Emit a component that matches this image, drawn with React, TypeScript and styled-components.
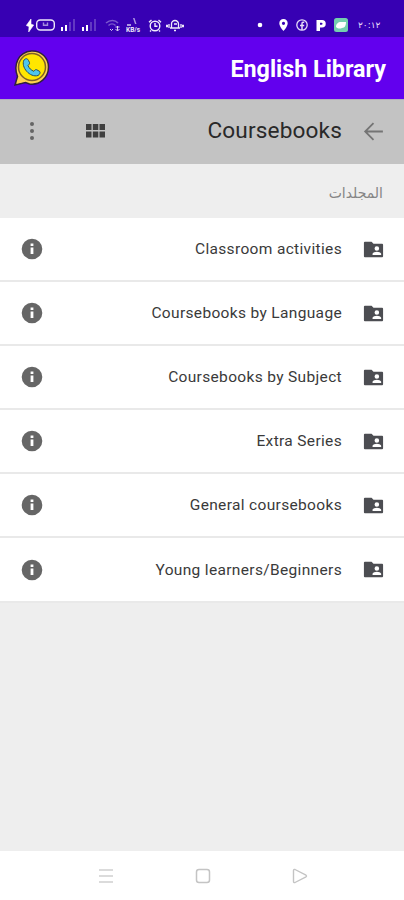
import React from "react";
import styled, { createGlobalStyle } from "styled-components";

const Global = createGlobalStyle`
  * { box-sizing: border-box; }
  body { margin: 0; background: #eee; font-family: Roboto, "Noto Sans", sans-serif; }
`;

const Screen = styled.div`
  width: 404px;
  height: 900px;
  display: flex;
  flex-direction: column;
  overflow: hidden;
  background: #eeeeee;
`;

const StatusBar = styled.header`
  height: 37px;
  flex: none;
  background: #3700b3;
  display: flex;
  align-items: flex-end;
  justify-content: space-between;
  padding: 0 23px 5px 26px;
`;

const StatusGroup = styled.div<{ $gap: number }>`
  display: flex;
  align-items: center;
  height: 14px;
  gap: ${(p) => p.$gap}px;
`;

const StatusIcon = styled.svg<{ $before?: number }>`
  display: block;
  flex: none;
  margin-left: ${(p) => p.$before ?? 0}px;
`;

const Clock = styled.span`
  width: 23px;
  margin-left: 2px;
  font: 400 9px/14px "DejaVu Sans", sans-serif;
  letter-spacing: -0.2px;
  color: #e6dcfa;
  white-space: nowrap;
`;

const AppBar = styled.div`
  height: 62px;
  flex: none;
  background: #6200ee;
  display: flex;
  align-items: center;
  justify-content: space-between;
  padding: 0 18px 0 13px;
`;

const AppTitle = styled.h1`
  margin: 0;
  padding-top: 2px;
  font-size: 23.3px;
  line-height: 30px;
  font-weight: 700;
  color: #fff;
`;

const Toolbar = styled.div`
  height: 65px;
  flex: none;
  background: #c3c3c3;
  border-top: 1px solid #b3adc0;
  display: flex;
  align-items: center;
  padding: 0 18px 2px 20px;
`;

const ToolIcon = styled.svg<{ $gap?: number }>`
  display: block;
  flex: none;
  margin-left: ${(p) => p.$gap ?? 0}px;
`;

const ToolTitle = styled.h2`
  margin: 0 0 0 auto;
  font-size: 22.6px;
  line-height: 30px;
  font-weight: 400;
  letter-spacing: 0.15px;
  color: #292929;
`;

const SectionLabel = styled.div`
  height: 54px;
  flex: none;
  direction: rtl;
  padding: 18px 21px 0;
  font: 400 14px/22px "DejaVu Sans", sans-serif;
  color: #858585;
`;

const List = styled.ul`
  list-style: none;
  margin: 0;
  padding: 0;
`;

const Row = styled.li`
  height: 64.1px;
  background: #fff;
  border-bottom: 2px solid #e9e9e9;
  display: flex;
  align-items: center;
  padding: 0 19px 0 20px;
`;

const RowText = styled.span`
  margin-left: auto;
  margin-right: 20px;
  font-size: 15.5px;
  line-height: 22px;
  letter-spacing: 0.34px;
  color: #3a3a3a;
  white-space: nowrap;
`;

const NavBar = styled.nav`
  height: 49px;
  flex: none;
  margin-top: auto;
  background: #fff;
  display: flex;
  justify-content: center;
  align-items: center;
  gap: 81px;
  padding-left: 1px;
`;

const InfoIcon = () => (
  <ToolIcon width="24" height="24" viewBox="0 0 24 24" fill="#666">
    <path d="M12 1.700a10.300 10.300 0 1 0 0 20.600 10.300 10.300 0 0 0 0-20.600zM13.400 17h-2.800v-6.500h2.800V17zm0-8h-2.800V6.400h2.800V9z" />
  </ToolIcon>
);

const FolderIcon = () => (
  <ToolIcon width="23" height="23" viewBox="0 0 24 24" fill="#4c4d52">
    <path d="M21 6h-9l-2-2H3c-.6 0-1 .4-1 1v14c0 .6.4 1 1 1h18c.6 0 1-.4 1-1V7c0-.6-.4-1-1-1zm-5.500 2.500a2.400 2.400 0 1 1 0 4.800 2.400 2.400 0 0 1 0-4.800zM20 17.700h-9v-1.200c0-1.500 3-2.200 4.500-2.200s4.500.7 4.500 2.200v1.200z" />
  </ToolIcon>
);

const Signal = ({ before }: { before: number }) => (
  <StatusIcon $before={before} width="16" height="12" viewBox="0 0 16 12" fill="#fff">
    <path d="M1 8h2v4H1zM5 6h2v6H5z" />
    <path d="M9 3h2v9H9zM13 0h2v12h-2z" opacity=".22" />
  </StatusIcon>
);

const Logo = () => (
  <ToolIcon width="37" height="38" viewBox="0 0 36 38">
    <path d="M4 27.500C-.5 15.500 5 3 18 2c10-.5 17 7 17 16 0 11-9 18.500-19 17l-4-1.500L1.500 36z" fill="#ffd34f" stroke="#30203f" strokeWidth="1.500" />
    <circle cx="18.500" cy="18" r="13.500" fill="#ffe600" stroke="#806029" strokeWidth="1.500" />
    <path d="M5 29 3.500 34.500 11 32.500" fill="#ffd34f" />
    <path d="M10.500 11c2-2 3.500-1.500 4.500.5l1 2c.5 1-.5 2-1.500 3 1.200 3 3 4.500 5.800 5.800 1.200-1.500 2-2 3-1.500l2.700 1.500c1.200 1 .5 3-1.500 4.200C16.500 29 7 18 10.500 11z" fill="#4fc6ee" stroke="#284d59" strokeWidth="1" />
  </ToolIcon>
);

const folders = [
  "Classroom activities",
  "Coursebooks by Language",
  "Coursebooks by Subject",
  "Extra Series",
  "General coursebooks",
  "Young learners/Beginners",
];

export default function App() {
  return (
    <>
      <Global />
      <Screen>
        <StatusBar>
          <StatusGroup $gap={0}>
            <StatusIcon width="8" height="13" viewBox="0 0 8 13" fill="#fff">
              <path d="M5 0 .3 6.500 3 7.500 2.700 13 7.700 6 5 5.300z" stroke="#fff" strokeWidth=".6" />
            </StatusIcon>
            <StatusIcon $before={2} width="19" height="12" viewBox="0 0 19 12" fill="none" stroke="#eee8fa" strokeWidth="1.400">
              <rect x=".7" y="1" width="17.600" height="10" rx="3.500" />
              <path d="M7.500 3.500v2.700h4V3.500" opacity=".6" />
            </StatusIcon>
            <Signal before={5} />
            <Signal before={5} />
            <StatusIcon $before={8} width="16" height="13" viewBox="0 0 16 13" fill="none" stroke="#fff">
              <path d="M1 4c4-3.500 9-3.500 12 0M3.500 6.500c2-2 5-2 7 0" opacity=".35" strokeWidth="1.500" />
              <path d="m5 10 1.500 1.500L8 10M12.500 7v4.500m-2-1.500 2 2 2-2m0-2h-4" opacity=".8" />
            </StatusIcon>
            <StatusIcon $before={5} width="16" height="14" viewBox="0 0 16 14" fill="#eee8fa">
              <path d="M7 0h1.500l2 6H9zM1 6h4v2H1z" opacity=".65" />
              <text x="0" y="13.500" fontSize="6.500" fontWeight="700" fontFamily="Roboto">KB/s</text>
            </StatusIcon>
            <StatusIcon $before={6} width="14" height="13" viewBox="0 0 14 13" fill="none" stroke="#f2edfc" strokeWidth="1.400">
              <circle cx="7" cy="7" r="4.800" />
              <path d="M7 4v3.300h2.500M1 3.200 3.500 1M13 3.200 10.500 1M3 11.500l-1 1m9-1 1 1" />
            </StatusIcon>
            <StatusIcon $before={4} width="18" height="13" viewBox="0 0 18 13" fill="none" stroke="#f0eafa" strokeWidth="1.300">
              <path d="M5.500 9V5a3.500 3.500 0 0 1 7 0v4h1.500M4 9h10M8 11.500h2M8 5h3M3 5v4M15 5v4" />
              <path d="M0 7h2m14 0h2" strokeWidth="2.500" />
            </StatusIcon>
          </StatusGroup>
          <StatusGroup $gap={8}>
            <StatusIcon width="6" height="6" viewBox="0 0 6 6" fill="#fff"><circle cx="3" cy="3" r="2.300" /></StatusIcon>
            <StatusIcon $before={8} width="9" height="12" viewBox="0 0 9 12" fill="#fff">
              <path fillRule="evenodd" d="M4.500 0C2 0 .3 1.900.3 4.200.3 7.500 4.500 12 4.500 12s4.200-4.500 4.200-7.800C8.700 1.900 7 0 4.500 0zm0 2.700a1.600 1.600 0 1 1 0 3.200 1.600 1.600 0 0 1 0-3.200z" />
            </StatusIcon>
            <StatusIcon width="12" height="12" viewBox="0 0 12 12" fill="none" stroke="#e5dcf8">
              <circle cx="6" cy="6" r="5.200" strokeWidth="1.300" />
              <path d="M8.300 3.300c-1.800-.5-2.300.2-2.300 1.700v6M4 6.500h4.200" strokeWidth="1.500" />
            </StatusIcon>
            <StatusIcon width="10" height="11" viewBox="0 0 10 11" fill="#fff">
              <path fillRule="evenodd" d="M.5 0H6a3.700 3.700 0 0 1 0 7.500H4V11H.5zM4 2.800v2h1.500a1 1 0 0 0 0-2z" />
            </StatusIcon>
            <StatusIcon width="14" height="14" viewBox="0 0 14 14">
              <rect width="14" height="14" rx="2.500" fill="#73cfae" />
              <path d="M2 9c0-3 2-5 5-5h5c0 3-1 6-4 6-2 .8-4 1-6-1z" fill="#fff" />
            </StatusIcon>
            <Clock>٢٠:١٢</Clock>
          </StatusGroup>
        </StatusBar>

        <AppBar>
          <Logo />
          <AppTitle>English Library</AppTitle>
        </AppBar>

        <Toolbar>
          <ToolIcon width="24" height="24" viewBox="0 0 24 24" fill="#656565">
            <circle cx="12" cy="5" r="2" /><circle cx="12" cy="12" r="2" /><circle cx="12" cy="19" r="2" />
          </ToolIcon>
          <ToolIcon $gap={41} width="21" height="16" viewBox="0 0 21 16" fill="#3f3f3f">
            <path d="M1 1h5.500v6H1zM7.800 1h5.500v6H7.800zM14.500 1H20v6h-5.500zM1 8.500h5.500v6H1zM7.800 8.500h5.500v6H7.800zM14.500 8.500H20v6h-5.500z" />
          </ToolIcon>
          <ToolTitle>Coursebooks</ToolTitle>
          <ToolIcon $gap={19} width="25" height="25" viewBox="0 0 24 24" fill="none" stroke="#747474" strokeWidth="1.700">
            <path d="M21 12H4.500M12 4l-8 8 8 8" />
          </ToolIcon>
        </Toolbar>

        <SectionLabel>المجلدات</SectionLabel>

        <List>
          {folders.map((name) => (
            <Row key={name}>
              <InfoIcon />
              <RowText>{name}</RowText>
              <FolderIcon />
            </Row>
          ))}
        </List>

        <NavBar>
          <ToolIcon width="16" height="16" viewBox="0 0 16 16" stroke="#d0d0d0" strokeWidth="1.500">
            <path d="M1 2h14M1 8h14M1 14h14" />
          </ToolIcon>
          <ToolIcon width="16" height="16" viewBox="0 0 16 16" fill="none" stroke="#c4c4c4" strokeWidth="1.500">
            <rect x="1.500" y="1.500" width="13" height="13" rx="2.500" />
          </ToolIcon>
          <ToolIcon width="16" height="16" viewBox="0 0 16 16" fill="none" stroke="#c4c4c4" strokeWidth="1.400" strokeLinejoin="round">
            <path d="M1.500 2.500q0-1.500 1.500-1l11 5.700q1 .8 0 1.600L3 14.500q-1.500.5-1.500-1z" />
          </ToolIcon>
        </NavBar>
      </Screen>
    </>
  );
}
